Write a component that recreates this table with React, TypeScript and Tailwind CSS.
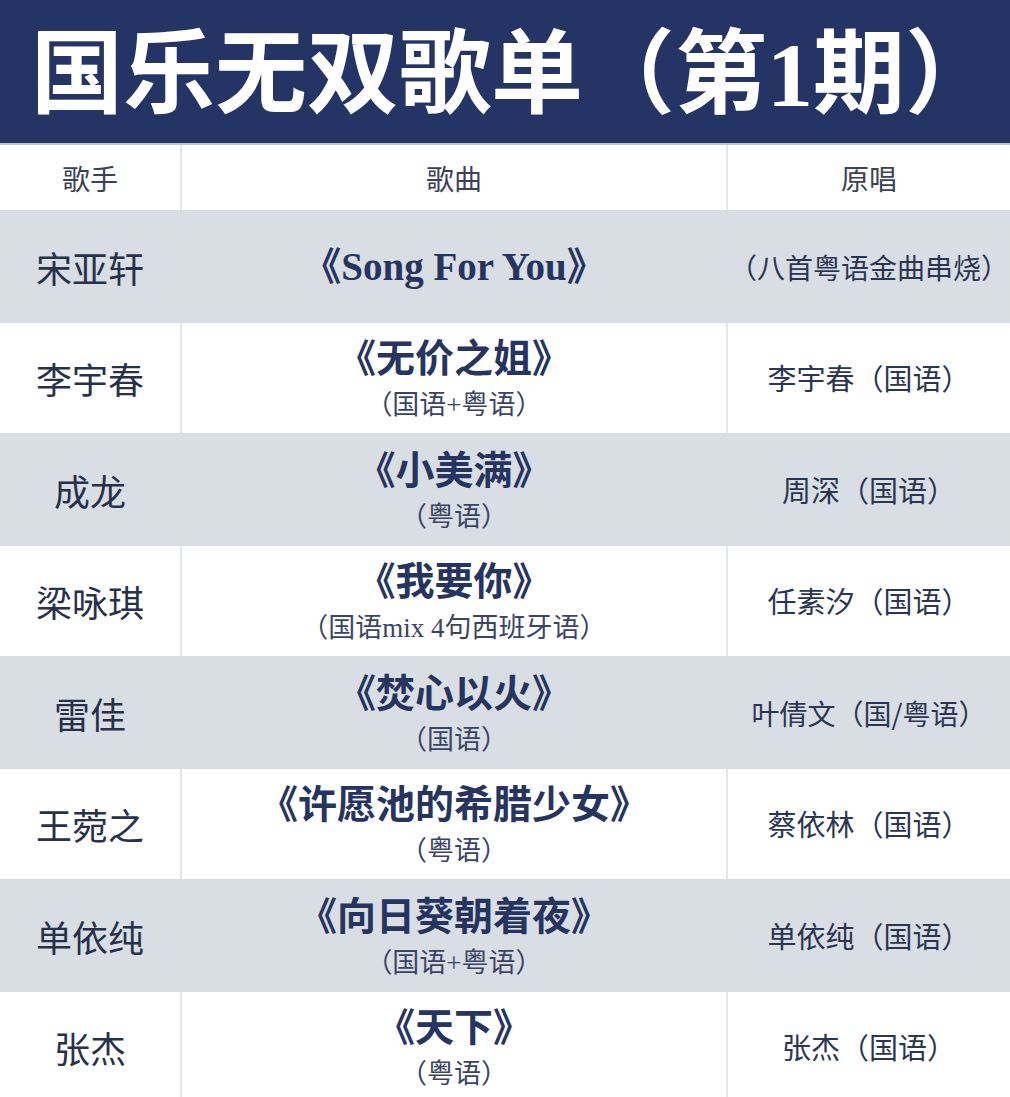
const rows = [
  { singer: '宋亚轩', song: '《Song For You》', note: '', original: '（八首粤语金曲串烧）' },
  { singer: '李宇春', song: '《无价之姐》', note: '（国语+粤语）', original: '李宇春（国语）' },
  { singer: '成龙', song: '《小美满》', note: '（粤语）', original: '周深（国语）' },
  { singer: '梁咏琪', song: '《我要你》', note: '（国语mix 4句西班牙语）', original: '任素汐（国语）' },
  { singer: '雷佳', song: '《焚心以火》', note: '（国语）', original: '叶倩文（国/粤语）' },
  { singer: '王菀之', song: '《许愿池的希腊少女》', note: '（粤语）', original: '蔡依林（国语）' },
  { singer: '单依纯', song: '《向日葵朝着夜》', note: '（国语+粤语）', original: '单依纯（国语）' },
  { singer: '张杰', song: '《天下》', note: '（粤语）', original: '张杰（国语）' },
];

const cjk = { fontFamily: '"Noto Sans CJK SC", sans-serif' };
const mixed = { fontFamily: '"Liberation Serif", "Noto Sans CJK SC", serif' };

export default function App() {
  return (
    <div className="w-[1010px] h-[1097px] overflow-hidden bg-white" style={cjk}>
      <div className="h-[145px] bg-[#243465] border-b-2 border-[#b9c3d6] flex items-center pl-[31px]">
        <h1 className="text-white text-[92px] font-bold leading-none whitespace-nowrap pb-[2px]">
          国乐无双歌单（第<span style={mixed}>1</span>期）
        </h1>
      </div>

      <div className="grid grid-cols-[182px_546px_1fr] h-[65px] bg-white text-[28px] text-[#3a4256]">
        <div className="flex items-center justify-center border-r-2 border-[#e4e7ec]">歌手</div>
        <div className="flex items-center justify-center border-r-2 border-[#e4e7ec]">歌曲</div>
        <div className="flex items-center justify-center">原唱</div>
      </div>

      {rows.map((r, i) => {
        const gray = i % 2 === 0;
        const long = r.original.length > 8;
        return (
          <div
            key={r.singer}
            className={
              gray
                ? 'grid grid-cols-[182px_546px_1fr] h-[113px] bg-[#d9dde4]'
                : 'grid grid-cols-[182px_546px_1fr] h-[110px] bg-white'
            }
          >
            <div
              className={
                gray
                  ? 'flex items-center justify-center border-r-2 border-[#d9dde4] text-[36px] text-[#27314a]'
                  : 'flex items-center justify-center border-r-2 border-[#e4e7ec] text-[36px] text-[#27314a]'
              }
            >
              {r.singer}
            </div>
            <div
              className={
                gray
                  ? 'flex flex-col items-center justify-center border-r-2 border-[#d9dde4]'
                  : 'flex flex-col items-center justify-center border-r-2 border-[#e4e7ec]'
              }
            >
              <div className="text-[39px] font-bold leading-[54px] text-[#26355f] whitespace-nowrap" style={mixed}>
                {r.song}
              </div>
              {r.note && (
                <div className="text-[27px] leading-[38px] text-[#3a4564] whitespace-nowrap" style={mixed}>
                  {r.note}
                </div>
              )}
            </div>
            <div
              className={
                long
                  ? 'flex items-center justify-center text-[28px] text-[#2b3652] whitespace-nowrap min-w-0'
                  : 'flex items-center justify-center text-[29px] text-[#2b3652] whitespace-nowrap min-w-0'
              }
            >
              {r.original}
            </div>
          </div>
        );
      })}
    </div>
  );
}
